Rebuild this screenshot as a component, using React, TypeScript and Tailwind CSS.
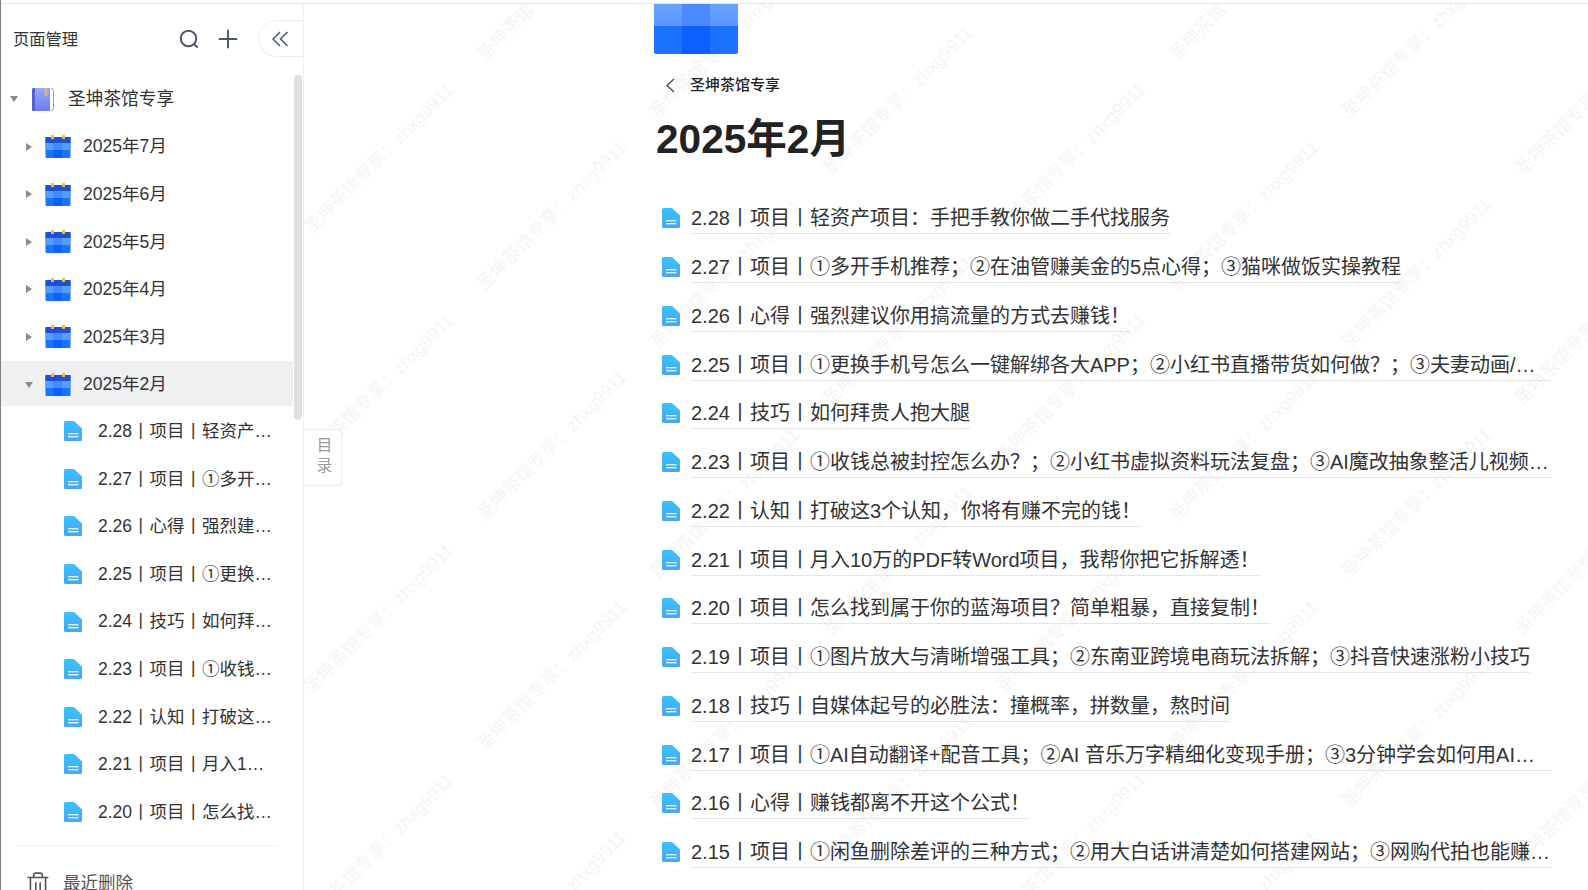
import React from "react";
import { Trash2 } from "lucide-react";

const FONT = "font-['Liberation_Sans','Noto_Sans_CJK_SC',sans-serif]";

const sideDocs = [
  "2.28丨项目丨轻资产项目：手把手教你做二手代找服务",
  "2.27丨项目丨①多开手机推荐；②在油管赚美金的5点心得",
  "2.26丨心得丨强烈建议你用搞流量的方式去赚钱！",
  "2.25丨项目丨①更换手机号怎么一键解绑各大APP",
  "2.24丨技巧丨如何拜贵人抱大腿",
  "2.23丨项目丨①收钱总被封控怎么办？",
  "2.22丨认知丨打破这3个认知，你将有赚不完的钱！",
  "2.21丨项目丨月入10万的PDF转Word项目",
  "2.20丨项目丨怎么找到属于你的蓝海项目？",
];

const docs = [
  "2.28丨项目丨轻资产项目：手把手教你做二手代找服务",
  "2.27丨项目丨①多开手机推荐；②在油管赚美金的5点心得；③猫咪做饭实操教程",
  "2.26丨心得丨强烈建议你用搞流量的方式去赚钱！",
  "2.25丨项目丨①更换手机号怎么一键解绑各大APP；②小红书直播带货如何做？；③夫妻动画/漫画账号拆解与实操教程",
  "2.24丨技巧丨如何拜贵人抱大腿",
  "2.23丨项目丨①收钱总被封控怎么办？；②小红书虚拟资料玩法复盘；③AI魔改抽象整活儿视频项目拆解",
  "2.22丨认知丨打破这3个认知，你将有赚不完的钱！",
  "2.21丨项目丨月入10万的PDF转Word项目，我帮你把它拆解透！",
  "2.20丨项目丨怎么找到属于你的蓝海项目？简单粗暴，直接复制！",
  "2.19丨项目丨①图片放大与清晰增强工具；②东南亚跨境电商玩法拆解；③抖音快速涨粉小技巧",
  "2.18丨技巧丨自媒体起号的必胜法：撞概率，拼数量，熬时间",
  "2.17丨项目丨①AI自动翻译+配音工具；②AI 音乐万字精细化变现手册；③3分钟学会如何用AI做爆款视频",
  "2.16丨心得丨赚钱都离不开这个公式！",
  "2.15丨项目丨①闲鱼删除差评的三种方式；②用大白话讲清楚如何搭建网站；③网购代拍也能赚钱的小项目",
];

const months = ["2025年7月", "2025年6月", "2025年5月", "2025年4月", "2025年3月"];

const marks: { x: number; y: number }[] = [];
for (let k = -1; k < 8; k++) {
  for (let j = -2; j < 6; j++) {
    const endX = 454 + 173 * k;
    const endY = ((85 + 57.3 * k) % 230 + 230) % 230 + 230 * j;
    marks.push({ x: endX - 75 - 304, y: endY + 74 });
  }
}

function DocIcon({ className }: { className: string }) {
  return (
    <svg viewBox="0 0 18 20" className={className}>
      <defs>
        <linearGradient id="docg" x1="0" y1="0" x2="0" y2="1">
          <stop offset="0" stopColor="#38c2ff" />
          <stop offset="1" stopColor="#4aa6ee" />
        </linearGradient>
      </defs>
      <path d="M1.5 0H10L18 7.5V18.5A1.5 1.5 0 0 1 16.5 20H1.5A1.5 1.5 0 0 1 0 18.5V1.5A1.5 1.5 0 0 1 1.5 0Z" fill="url(#docg)" />
      <rect x="4" y="12" width="10.5" height="1.4" fill="#d6f1ff" />
      <rect x="4" y="15" width="10.5" height="1.4" fill="#d6f1ff" />
    </svg>
  );
}

function CalIcon() {
  return (
    <svg viewBox="0 0 26 23" className="h-[23px] w-[26px] shrink-0">
      <rect x="0.5" y="2" width="25" height="21" rx="1.2" fill="#1a72ff" />
      <rect x="0.5" y="2" width="25" height="6" fill="#1a4fd6" />
      <rect x="0.5" y="8" width="8.3" height="7" fill="#5a9bff" />
      <rect x="8.8" y="8" width="8.3" height="7" fill="#458aff" />
      <rect x="17.1" y="8" width="8.4" height="7" fill="#5a9bff" />
      <rect x="8.8" y="15" width="8.3" height="8" fill="#0b60ff" />
      <rect x="6" y="0" width="3" height="4" rx="0.6" fill="#f2b84b" />
      <rect x="17" y="0" width="3" height="4" rx="0.6" fill="#f2b84b" />
    </svg>
  );
}

function BookIcon() {
  return (
    <svg viewBox="0 0 22 23" className="h-[23px] w-[22px] shrink-0">
      <defs>
        <linearGradient id="bookg" x1="0" y1="0" x2="0" y2="1">
          <stop offset="0" stopColor="#9aa9f9" />
          <stop offset="1" stopColor="#6d7cf1" />
        </linearGradient>
      </defs>
      <path d="M2 0H18V23H2A2 2 0 0 1 0 21V2A2 2 0 0 1 2 0Z" fill="url(#bookg)" />
      <path d="M1.5 0H3V23H1.5A1.5 1.5 0 0 1 0 21.5V1.5A1.5 1.5 0 0 1 1.5 0Z" fill="#5062cc" />
      <path d="M19 0.5H19.5A2 2 0 0 1 21.5 2.5V20.5A2 2 0 0 1 19.5 22.5H19" fill="none" stroke="#8e9cf2" strokeWidth="1" />
      <rect x="13" y="0" width="2.2" height="8.5" fill="#f2b84b" />
    </svg>
  );
}

function CaretDown({ className }: { className: string }) {
  return (
    <svg viewBox="0 0 8 6" className={className}>
      <path d="M0 0H8L4 6Z" fill="#868b94" />
    </svg>
  );
}

function CaretRight({ className }: { className: string }) {
  return (
    <svg viewBox="0 0 6 8" className={className}>
      <path d="M0 0V8L6 4Z" fill="#868b94" />
    </svg>
  );
}

export default function App() {
  return (
    <div className={`${FONT} flex h-[890px] w-[1588px] overflow-hidden border-l border-l-[#7f7f7f] bg-white pt-[3px]`}>
      <div className="flex w-full border-t border-t-[#e6e6e6]">
        <aside className="flex w-[303px] shrink-0 flex-col overflow-hidden border-r border-r-[#f0f0f0]">
          <div className="flex h-[71.5px] shrink-0 items-center pl-3">
            <span className="mb-[2px] w-[66px] text-[16.3px] text-[#333]">页面管理</span>
            <svg viewBox="0 0 20 20" className="mb-[2px] ml-[100px] h-5 w-5 text-[#4b5563]" fill="none" stroke="currentColor" strokeWidth="1.9" strokeLinecap="round">
              <circle cx="9.5" cy="9.5" r="7.8" />
              <path d="M15.5 15.5L18 18" />
            </svg>
            <svg viewBox="0 0 20 20" className="mb-[2px] ml-[19px] h-5 w-5 text-[#4b5563]" fill="none" stroke="currentColor" strokeWidth="1.9" strokeLinecap="round">
              <path d="M10 1.5V18.5M1.5 10H18.5" />
            </svg>
            <div className="mb-[2px] ml-5 flex h-[37px] flex-1 items-center rounded-l-[19px] border border-r-0 border-[#ebebeb] pl-[13px]">
              <svg viewBox="0 0 17 16" className="h-4 w-[17px] text-[#4b5563]" fill="none" stroke="currentColor" strokeWidth="1.5">
                <path d="M8 1L1 8L8 15M15.5 1L8.5 8L15.5 15" />
              </svg>
            </div>
          </div>

          <div className="flex min-h-0 flex-1">
            <div className="w-[292px] shrink-0">
              <div className="mb-[2.6px] flex h-[45px] items-center pl-[9px] pt-[2px]">
                <CaretDown className="h-[6px] w-[8px]" />
                <div className="ml-[14px]"><BookIcon /></div>
                <span className="ml-[14px] text-[17.7px] text-[#333]">圣坤茶馆专享</span>
              </div>
              {months.map((m) => (
                <div key={m} className="mb-[2.6px] flex h-[45px] items-center pl-[25px] pt-[2px]">
                  <CaretRight className="h-[8px] w-[6px]" />
                  <div className="ml-[13px]"><CalIcon /></div>
                  <span className="ml-3 text-[17.5px] text-[#333]">{m}</span>
                </div>
              ))}
              <div className="mb-[2.6px] flex h-[45px] items-center bg-[#eff0f2] pl-6 pt-[2px]">
                <CaretDown className="h-[6px] w-[8px]" />
                <div className="ml-3"><CalIcon /></div>
                <span className="ml-3 text-[17.5px] text-[#333]">2025年2月</span>
              </div>
              {sideDocs.map((d) => (
                <div key={d} className="mb-[2.6px] flex h-[45px] items-center pl-[63px]">
                  <DocIcon className="h-5 w-[18px] shrink-0" />
                  <span className="ml-4 w-[175px] truncate text-[17.5px] text-[#333]">{d}</span>
                </div>
              ))}
              <div className="mx-[15px] mt-[11px] border-t border-t-[#f2f2f2]" />
              <div className="mt-[24px] flex items-center pl-[24px] text-[#555]">
                <Trash2 className="h-[26px] w-[26px]" strokeWidth={1.5} />
                <span className="ml-[12px] text-[17.5px]">最近删除</span>
              </div>
            </div>
            <div className="-mt-[1px] ml-px w-[8px] shrink-0">
              <div className="h-[345px] rounded-[4px] bg-[#e0e0e0]" />
            </div>
          </div>
        </aside>

        <main className="relative min-w-0 flex-1 overflow-hidden pl-[350px]">
          <div className="pointer-events-none absolute inset-0">
            {marks.map((p, i) => (
              <div
                key={i}
                className="absolute -translate-x-1/2 -translate-y-1/2 -rotate-45 whitespace-nowrap text-[18px] text-[#f5f5f5]"
                style={{ left: p.x, top: p.y - 4 }}
              >
                圣坤茶馆专享：zhxg9911
              </div>
            ))}
          </div>

          <div className="absolute left-0 top-[425px] flex h-[57px] w-[38px] flex-col items-center justify-start rounded-r-[4px] border border-l-0 border-[#ececec] bg-white pl-1 pt-[6px] text-[15.5px] leading-[20px] text-[#999]">
            <span>目</span>
            <span>录</span>
          </div>

          <div className="relative">
            <svg viewBox="0 0 84 50" className="h-[50px] w-[84px]">
              <defs>
                <linearGradient id="bantop" x1="0" y1="0" x2="0" y2="1">
                  <stop offset="0" stopColor="#6aa4ff" />
                  <stop offset="1" stopColor="#5a97ff" />
                </linearGradient>
              </defs>
              <path d="M0 0H84V48A2 2 0 0 1 82 50H2A2 2 0 0 1 0 48Z" fill="#1a72ff" />
              <rect x="0" y="0" width="28" height="22" fill="url(#bantop)" />
              <rect x="28" y="0" width="28" height="22" fill="#4a89ff" />
              <rect x="56" y="0" width="28" height="22" fill="url(#bantop)" />
              <rect x="28" y="22" width="28" height="28" fill="#0b60ff" />
            </svg>

            <div className="mt-[19px] flex h-6 items-center">
              <svg viewBox="0 0 10 15" className="ml-[11px] h-[15px] w-[10px] text-[#555]" fill="none" stroke="currentColor" strokeWidth="1.5">
                <path d="M9 1L2 7.5L9 14" />
              </svg>
              <span className="ml-[15px] text-[15px] font-medium text-[#222]">圣坤茶馆专享</span>
            </div>

            <h1 className="mt-[14px] ml-[2px] text-[40.6px] font-bold leading-[56px] text-[#222]">2025年2月</h1>

            <div className="mt-[26.9px]">
              {docs.map((d) => (
                <div key={d} className="flex h-[48.75px] items-center pl-2">
                  <DocIcon className="h-5 w-[18px] shrink-0" />
                  <span className="ml-[11px] mt-[2px] block max-w-[860px] truncate border-b border-b-[#e5e5e5] text-[20px] leading-[29px] text-[#333]">{d}</span>
                </div>
              ))}
            </div>
          </div>
        </main>
      </div>
    </div>
  );
}
